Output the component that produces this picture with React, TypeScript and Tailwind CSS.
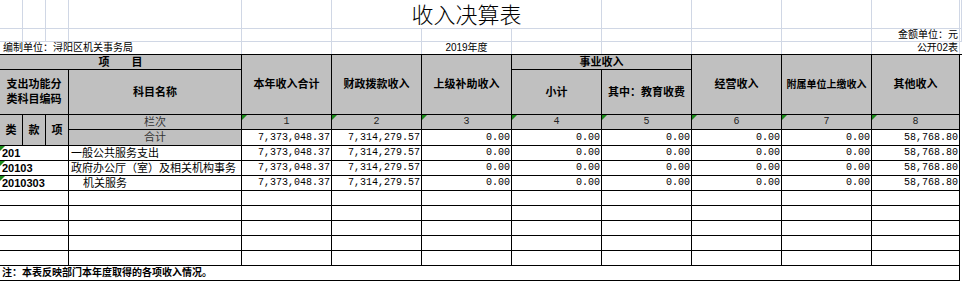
import React from 'react';

const COLS = 'grid grid-cols-[23px_23px_23px_173px_repeat(7,90px)_88px]';
const TOP_COLS = 'grid grid-cols-[23px_23px_23px_173px_repeat(7,90px)_88px_2px]';

const values = ['7,373,048.37', '7,314,279.57', '0.00', '0.00', '0.00', '0.00', '0.00', '58,768.80'];

const rows = [
  { code: '201', name: '一般公共服务支出', indent: false },
  { code: '20103', name: '政府办公厅（室）及相关机构事务', indent: false },
  { code: '2010303', name: '机关服务', indent: true },
];

const heads = ['本年收入合计', '财政拨款收入', '上级补助收入'];
const heads2 = ['经营收入', '附属单位上缴收入', '其他收入'];

function Flag() {
  return (
    <span className="absolute left-0 top-0 h-0 w-0 border-t-[5px] border-r-[5px] border-t-[#1a8a1a] border-r-transparent" />
  );
}

function Num({ v }: { v: string }) {
  return (
    <div className="flex items-center justify-end border-r border-b border-black bg-white pr-px font-['Liberation_Mono',monospace] text-[10px] leading-none">
      {v}
    </div>
  );
}

export default function App() {
  const grid = 'border-r border-b border-[#d0d7e5]';
  return (
    <div className="h-[285px] w-[962px] overflow-hidden bg-white font-['Liberation_Sans','Noto_Sans_CJK_SC',sans-serif] text-black">
      {/* sheet heading */}
      <div className={`${TOP_COLS} grid-rows-[29px_13px_12px]`}>
        {Array.from({ length: 5 }).map((_, i) => (
          <div key={`a${i}`} className={grid} />
        ))}
        <div className={`${grid} col-span-3 flex items-end justify-center pb-px text-[22px] leading-none font-light`}>
          收入决算表
        </div>
        {Array.from({ length: 5 }).map((_, i) => (
          <div key={`b${i}`} className={grid} />
        ))}

        {Array.from({ length: 11 }).map((_, i) => (
          <div key={`c${i}`} className={grid} />
        ))}
        <div className={`${grid} flex items-center justify-end whitespace-nowrap pr-px text-[10px] leading-none`}>
          金额单位：元
        </div>
        <div className={grid} />

        <div className="col-span-4 flex items-center whitespace-nowrap border-r border-[#d0d7e5] pl-[3px] text-[10px] leading-none">
          编制单位：浔阳区机关事务局
        </div>
        <div className="border-r border-[#d0d7e5]" />
        <div className="border-r border-[#d0d7e5]" />
        <div className="flex items-center justify-center whitespace-nowrap border-r border-[#d0d7e5] text-[10px] leading-none">
          2019年度
        </div>
        {Array.from({ length: 4 }).map((_, i) => (
          <div key={`d${i}`} className="border-r border-[#d0d7e5]" />
        ))}
        <div className="flex items-center justify-end whitespace-nowrap border-r border-[#d0d7e5] pr-px text-[10px] leading-none">
          公开02表
        </div>
        <div />
      </div>

      {/* income table */}
      <div className={`${COLS} grid-rows-[15px_45px_15px_16px_repeat(10,15px)] border-t border-black text-[11px] leading-none`}>
        <div className="col-span-4 flex items-center justify-center border-r border-b border-black bg-[#c0c0c0] font-bold">
          项　　目
        </div>
        {heads.map((h) => (
          <div key={h} className="row-span-2 flex items-center justify-center border-r border-b border-black bg-[#c0c0c0] font-bold">
            {h}
          </div>
        ))}
        <div className="col-span-2 flex items-center justify-center border-r border-b border-black bg-[#c0c0c0] font-bold">
          事业收入
        </div>
        {heads2.map((h) => (
          <div
            key={h}
            className={`row-span-2 flex items-center justify-center whitespace-nowrap border-r border-b border-black bg-[#c0c0c0] font-bold ${h.length > 6 ? 'text-[10px]' : ''}`}
          >
            {h}
          </div>
        ))}

        <div className="col-span-3 flex flex-col items-center justify-center border-r border-b border-black bg-[#c0c0c0] font-bold leading-[15px]">
          <span>支出功能分</span>
          <span>类科目编码</span>
        </div>
        <div className="flex items-center justify-center border-r border-b border-black bg-[#c0c0c0] font-bold">科目名称</div>
        <div className="flex items-center justify-center border-r border-b border-black bg-[#c0c0c0] font-bold">小计</div>
        <div className="flex items-center justify-center whitespace-nowrap border-r border-b border-black bg-[#c0c0c0] font-bold">
          其中：教育收费
        </div>

        {['类', '款', '项'].map((h) => (
          <div key={h} className="row-span-2 flex items-center justify-center border-r border-b border-black bg-[#c0c0c0] font-bold">
            {h}
          </div>
        ))}
        <div className="flex items-center justify-center border-r border-b border-black bg-[#c0c0c0] text-[#333]">栏次</div>
        {[1, 2, 3, 4, 5, 6, 7, 8].map((n) => (
          <div
            key={n}
            className="relative flex items-center justify-center border-r border-b border-black bg-[#c0c0c0] font-['Liberation_Mono',monospace] text-[10px] text-[#222]"
          >
            <Flag />
            {n}
          </div>
        ))}

        <div className="flex items-center justify-center border-r border-b border-black bg-[#c0c0c0] text-[#333]">合计</div>
        {values.map((v, i) => (
          <Num key={`t${i}`} v={v} />
        ))}

        {rows.map((r) => (
          <React.Fragment key={r.code}>
            <div className="relative col-span-3 flex items-center border-r border-b border-black pl-[2px] font-bold">
              <Flag />
              {r.code}
            </div>
            <div className={`flex items-center whitespace-nowrap border-r border-b border-black ${r.indent ? 'pl-[14px]' : 'pl-[2px]'}`}>
              {r.name}
            </div>
            {values.map((v, i) => (
              <Num key={i} v={v} />
            ))}
          </React.Fragment>
        ))}

        {Array.from({ length: 5 }).map((_, k) => (
          <React.Fragment key={`e${k}`}>
            <div className="col-span-3 border-r border-b border-black" />
            {Array.from({ length: 9 }).map((_, i) => (
              <div key={i} className="border-r border-b border-black" />
            ))}
          </React.Fragment>
        ))}

        <div className="col-span-12 flex items-center border-r border-b border-black pl-[2px] text-[10px] font-bold">
          注：本表反映部门本年度取得的各项收入情况。
        </div>
      </div>

      {/* empty sheet row below */}
      <div className={`${COLS} h-[15px]`}>
        {Array.from({ length: 12 }).map((_, i) => (
          <div key={i} className={grid} />
        ))}
      </div>
    </div>
  );
}
